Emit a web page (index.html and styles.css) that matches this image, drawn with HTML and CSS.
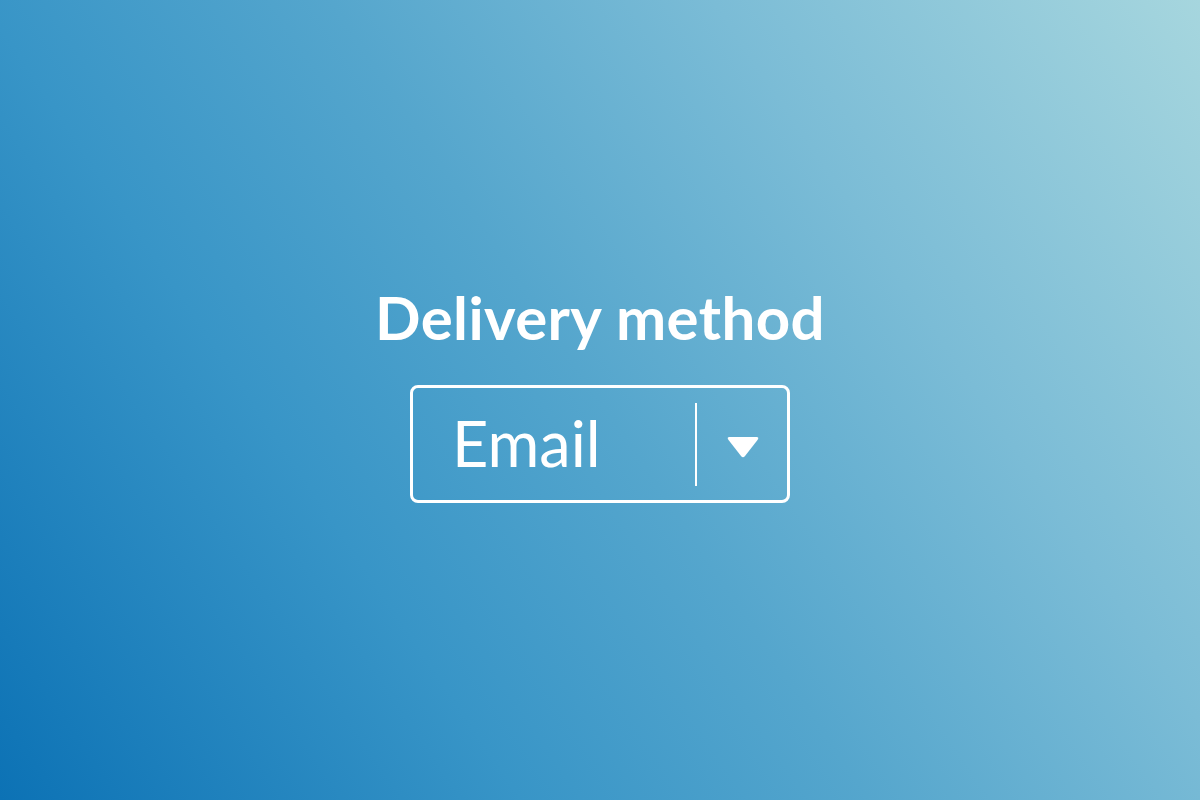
FILE: index.html
```html
<!DOCTYPE html>
<html lang="en">
<head>
<meta charset="utf-8">
<title>Delivery method</title>
<link rel="stylesheet" href="styles.css">
</head>
<body>
<main class="stage">
  <h1 class="title">Delivery method</h1>
  <div class="select">
    <span class="select-value">Email</span>
    <span class="select-divider"></span>
    <span class="select-toggle">
      <svg class="caret" width="34" height="24" viewBox="0 0 34 24" aria-hidden="true">
        <path d="M3.5 2 H30.5 Q33.5 2 31.5 5 L19 21 Q17 23.5 15 21 L2.5 5 Q0.5 2 3.5 2 Z" fill="#fff"/>
      </svg>
    </span>
  </div>
</main>
</body>
</html>
```
FILE: styles.css
```css
html, body {
  margin: 0;
  padding: 0;
  height: 100%;
}
body {
  font-family: "Lato", "Open Sans", sans-serif;
  color: #fff;
  background: linear-gradient(56deg, #0c72b5 0%, #3895c7 30%, #55a6cd 50%, #7bbcd6 72%, #a6d6de 100%);
  overflow: hidden;
}
.stage {
  box-sizing: border-box;
  height: 100%;
  padding-bottom: 15px;
  display: flex;
  flex-direction: column;
  align-items: center;
  justify-content: center;
}
.title {
  margin: 0 0 33px;
  font-size: 60px;
  font-weight: 700;
  line-height: 70px;
  letter-spacing: 0.4px;
}
.select {
  box-sizing: border-box;
  width: 380px;
  height: 118px;
  border: 3px solid #fff;
  border-radius: 8px;
  display: flex;
  align-items: center;
}
.select-value {
  flex: 1;
  padding-left: 39px;
  font-size: 63px;
  font-weight: 400;
  line-height: 1;
  padding-bottom: 4px;
}
.select-divider {
  width: 2px;
  height: 83px;
  background: #fff;
  margin-top: 1px;
}
.select-toggle {
  box-sizing: border-box;
  width: 90px;
  display: flex;
  align-items: center;
  justify-content: center;
  padding-top: 6px;
  padding-left: 2px;
}
.caret {
  display: block;
}
```
